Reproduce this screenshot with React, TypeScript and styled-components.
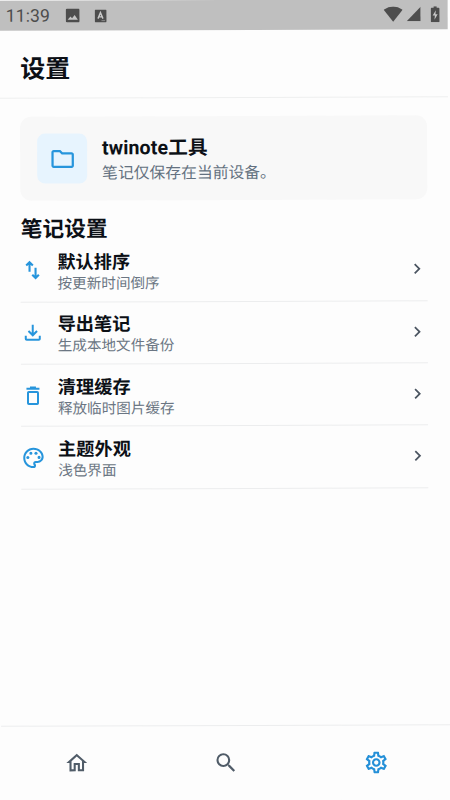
import React from 'react';
import styled, { createGlobalStyle } from 'styled-components';
import {
  MdChevronRight,
  MdOutlineFileDownload,
  MdOutlineFolder,
  MdOutlineHome,
  MdOutlinePalette,
  MdOutlineSettings,
  MdSearch,
} from 'react-icons/md';

const Global = createGlobalStyle`
  * { box-sizing: border-box; }
  html, body { margin: 0; background: #fdfdfd; overflow: hidden; }
  body { font-family: Roboto, "Noto Sans CJK SC", sans-serif; }
  svg { display: block; flex: none; }
`;

const Screen = styled.div`
  width: 448.5px;
  height: 800px;
  display: flex;
  flex-direction: column;
  background: #fdfdfd;
  color: #0c1016;
  transform: rotate(-0.2deg);
`;

const StatusBar = styled.div`
  height: 30px;
  flex: none;
  display: flex;
  align-items: center;
  padding: 0 8px 0 7px;
  background: #bfbfbf;
  color: #4d4d4d;
`;

const Clock = styled.span`
  width: 60px;
  font-size: 17.6px;
  line-height: 20px;
  letter-spacing: 0.1px;
`;

const Notifications = styled.div`
  display: flex;
  align-items: center;
  gap: 15px;
  flex: 1;
`;

const Signals = styled.div`
  display: flex;
  align-items: center;
  gap: 4px;
  padding-bottom: 1px;
`;

const BatterySlot = styled.div`
  margin-left: 6px;
`;

const Header = styled.header`
  height: 68px;
  flex: none;
  padding: 21.5px 21.5px 0;
  border-bottom: 1px solid #eeefef;
`;

const Title = styled.h1`
  margin: 0;
  font-size: 25px;
  line-height: 34px;
  font-weight: 700;
`;

const Content = styled.main`
  flex: 1;
  padding: 18px 20.5px 0 21.4px;
`;

const Card = styled.section`
  height: 84px;
  display: flex;
  align-items: center;
  gap: 14.5px;
  padding: 0 16.5px;
  border-radius: 11px;
  background: #f8f8f8;
`;

const CardIcon = styled.div`
  width: 50.5px;
  height: 50.5px;
  display: flex;
  align-items: center;
  justify-content: center;
  border-radius: 8px;
  background: #e7f4fe;
  color: #2795dc;
`;

const CardBody = styled.div`
  padding-top: 4.5px;
`;

const CardTitle = styled.div`
  font-size: 19.6px;
  line-height: 25px;
  font-weight: 700;
  letter-spacing: 0.1px;
`;

const CardText = styled.div`
  font-size: 15.8px;
  line-height: 25px;
  color: #647180;
`;

const SectionTitle = styled.h2`
  margin: 13.5px 0 2.7px;
  font-size: 21.7px;
  line-height: 30px;
  font-weight: 700;
`;

const Row = styled.div<{ $first?: boolean }>`
  height: ${(p) => (p.$first ? 55.5 : 62.4)}px;
  display: flex;
  align-items: center;
  border-bottom: 1px solid #ecedee;
  padding: ${(p) => (p.$first ? '0 0 5.5px' : '1.5px 0 0')};
`;

const RowIcon = styled.div`
  width: 36.5px;
  padding-bottom: 1.5px;
  color: #2795dc;
`;

const RowBody = styled.div`
  flex: 1;
  padding-top: 1px;
`;

const RowTitle = styled.div`
  font-size: 18.2px;
  line-height: 23px;
  font-weight: 700;
`;

const RowText = styled.div`
  font-size: 14.6px;
  line-height: 20px;
  color: #6b7683;
`;

const Chevron = styled.div`
  padding-bottom: 2px;
  color: #4b5561;
`;

const TabBar = styled.nav`
  height: 75px;
  flex: none;
  display: grid;
  grid-template-columns: repeat(3, 1fr);
  padding: 0 0 1px 1px;
  border-top: 1px solid #ecedee;
`;

const Tab = styled.div<{ $active?: boolean }>`
  display: flex;
  align-items: center;
  justify-content: center;
  padding-left: ${(p) => (p.$active ? 1.5 : 0)}px;
  color: ${(p) => (p.$active ? '#2590d8' : '#505c68')};
`;

const SortIcon = () => (
  <svg width="24" height="24" viewBox="0 0 24 24" fill="none" stroke="currentColor" strokeWidth="2.1">
    <path d="M9 13V4M5.700 6.800 9 3.500l3.300 3.300M15 9v9.500M11.700 16 15 19.300l3.300-3.300" />
  </svg>
);

const TrashIcon = () => (
  <svg width="24" height="24" viewBox="0 0 24 24" fill="none" stroke="currentColor" strokeWidth="2">
    <path d="M5.5 5h13M9 3.9h6" />
    <rect x="7" y="8.3" width="10" height="12" rx="0.8" />
  </svg>
);

const DownloadIcon = () => <MdOutlineFileDownload size={24} />;

const PaletteIcon = () => <MdOutlinePalette size={24.5} />;

interface Setting {
  icon: React.ComponentType;
  title: string;
  text: string;
}

const settings: Setting[] = [
  { icon: SortIcon, title: '默认排序', text: '按更新时间倒序' },
  { icon: DownloadIcon, title: '导出笔记', text: '生成本地文件备份' },
  { icon: TrashIcon, title: '清理缓存', text: '释放临时图片缓存' },
  { icon: PaletteIcon, title: '主题外观', text: '浅色界面' },
];

const PictureIcon = () => (
  <svg width="14" height="14" viewBox="0 0 14 14">
    <rect width="14" height="14" rx="1.5" fill="#4d4d4d" />
    <path d="M2 11.2 4.8 8l1.6 1.6L9 6.6l3.2 4.6z" fill="#c4c4c4" />
  </svg>
);

const LetterIcon = () => (
  <svg width="12" height="13" viewBox="0 0 12 13">
    <rect width="12" height="13" rx="1.2" fill="#4d4d4d" />
    <path d="M3.3 9.2 5.8 3.2l2.5 6M4.2 7.4h3.2" fill="none" stroke="#c8c8c8" strokeWidth="1.4" />
    <path d="M6.8 11.2h3.6" stroke="#999" strokeWidth="0.8" />
  </svg>
);

const WifiIcon = () => (
  <svg width="19" height="16" viewBox="0 0 19 16">
    <path d="M0 3.4Q9.5-3 19 3.4L9.5 15.3z" fill="#4d4d4d" />
  </svg>
);

const CellIcon = () => (
  <svg width="14" height="15" viewBox="0 0 14 15">
    <path d="M14 .5V15H0z" fill="#4d4d4d" />
  </svg>
);

const BatteryIcon = () => (
  <svg width="9" height="16" viewBox="0 0 9 16">
    <path d="M3 0h3v1.5h2q1 0 1 1V15q0 1-1 1H1q-1 0-1-1V2.5q0-1 1-1h2z" fill="#4d4d4d" />
    <path d="M5.2 4 2 9.3h2.2L3.8 13.5 7 8H4.8z" fill="#c8c8c8" />
  </svg>
);

export default function App() {
  return (
    <>
      <Global />
      <Screen>
        <StatusBar>
          <Clock>11:39</Clock>
          <Notifications>
            <PictureIcon />
            <LetterIcon />
          </Notifications>
          <Signals>
            <WifiIcon />
            <CellIcon />
            <BatterySlot>
              <BatteryIcon />
            </BatterySlot>
          </Signals>
        </StatusBar>
        <Header>
          <Title>设置</Title>
        </Header>
        <Content>
          <Card>
            <CardIcon>
              <MdOutlineFolder size={27} />
            </CardIcon>
            <CardBody>
              <CardTitle>twinote工具</CardTitle>
              <CardText>笔记仅保存在当前设备。</CardText>
            </CardBody>
          </Card>
          <SectionTitle>笔记设置</SectionTitle>
          {settings.map(({ icon: Icon, title, text }, i) => (
            <Row key={title} $first={i === 0}>
              <RowIcon>
                <Icon />
              </RowIcon>
              <RowBody>
                <RowTitle>{title}</RowTitle>
                <RowText>{text}</RowText>
              </RowBody>
              <Chevron>
                <MdChevronRight size={21} />
              </Chevron>
            </Row>
          ))}
        </Content>
        <TabBar>
          <Tab>
            <MdOutlineHome size={25} />
          </Tab>
          <Tab>
            <MdSearch size={25.5} />
          </Tab>
          <Tab $active>
            <MdOutlineSettings size={26} />
          </Tab>
        </TabBar>
      </Screen>
    </>
  );
}
